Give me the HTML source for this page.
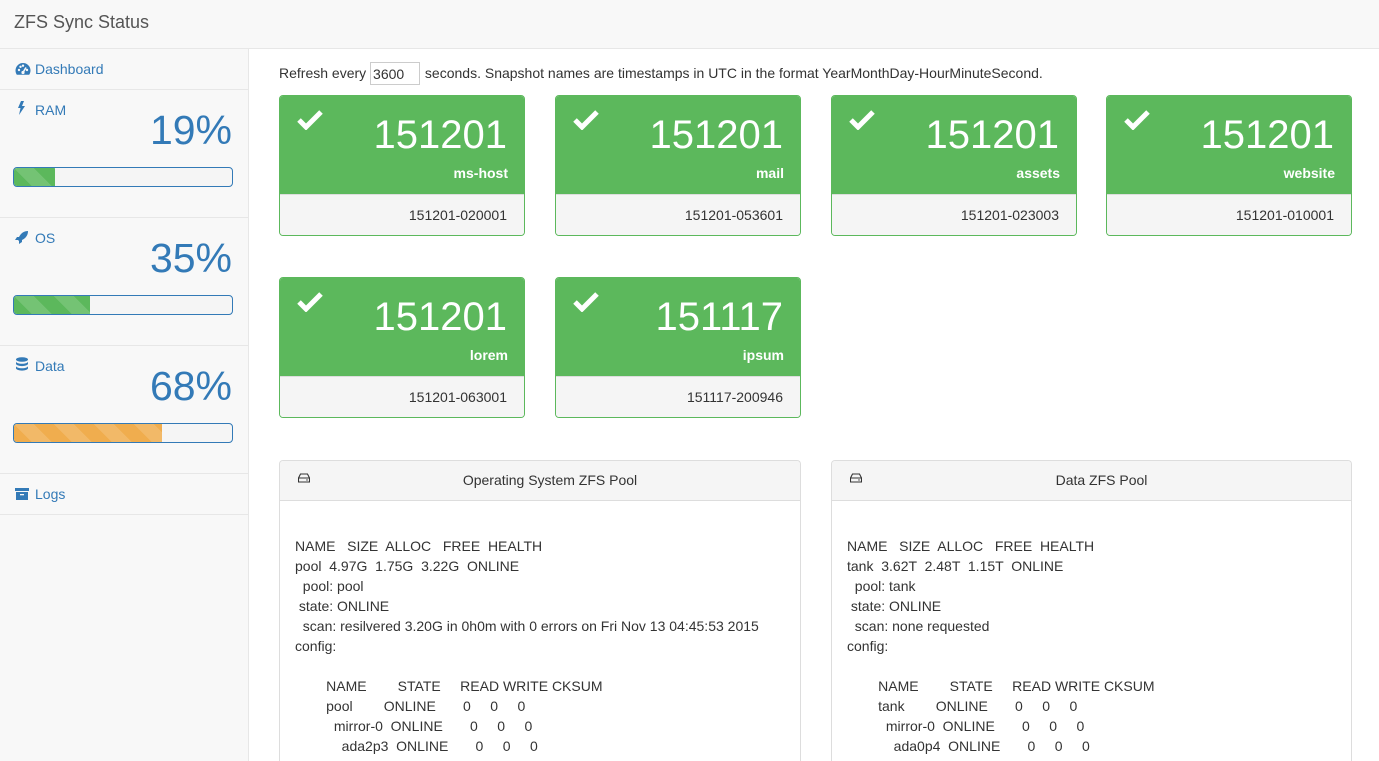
<!DOCTYPE html>
<html><head><meta charset="utf-8"><style>
*{box-sizing:border-box;margin:0;padding:0}
html,body{width:1379px;height:761px;overflow:hidden}
body{font-family:"Liberation Sans",Arial,sans-serif;font-size:14px;color:#333;background:#fff;position:relative}
.hdr{position:absolute;left:0;top:0;width:1379px;height:49px;background:#f8f8f8;border-bottom:1px solid #e7e7e7}
.hdr span{position:absolute;left:14px;top:12px;font-size:18px;color:#555}
.side{position:absolute;left:0;top:49px;width:249px;height:712px;background:#f8f8f8;border-right:1px solid #e7e7e7}
.item{position:absolute;left:0;width:248px;border-bottom:1px solid #e7e7e7;color:#337ab7}
.lbl{position:absolute;left:35px;font-size:14px;color:#337ab7}
.ic{position:absolute;left:15px}
.pct{position:absolute;right:16px;font-size:41px;color:#337ab7;top:17px}
.bar{position:absolute;left:13px;top:77px;width:220px;height:20px;border:1px solid #337ab7;border-radius:4px;background:#f5f5f5;overflow:hidden}
.bar div{height:100%}
.g{background:#5cb85c;background-image:linear-gradient(45deg,rgba(255,255,255,.15) 25%,transparent 25%,transparent 50%,rgba(255,255,255,.15) 50%,rgba(255,255,255,.15) 75%,transparent 75%,transparent);background-size:40px 40px}
.o{background:#f0ad4e;background-image:linear-gradient(45deg,rgba(255,255,255,.15) 25%,transparent 25%,transparent 50%,rgba(255,255,255,.15) 50%,rgba(255,255,255,.15) 75%,transparent 75%,transparent);background-size:40px 40px}
.refresh{position:absolute;left:279px;top:63px;font-size:14px;color:#333}
.refresh .in{display:inline-block;width:50px;height:23px;border:1px solid #ccc;vertical-align:middle;padding:3px 0 0 2px;margin:0 1px 0 0;position:relative;top:-1px;left:0}
.card{position:absolute;width:246px;height:141px;border:1px solid #5cb85c;border-radius:4px;overflow:hidden}
.card .top{height:98px;background:#5cb85c;color:#fff;position:relative}
.card .num{position:absolute;right:17px;top:17px;font-size:40px}
.card .nm{position:absolute;right:16px;top:69px;font-size:14px;font-weight:bold}
.card .bot{background:#f5f5f5;border-top:1px solid #ddd;height:42px;text-align:right;padding:12px 17px 0 0;font-size:14px;color:#333}
.card svg{position:absolute;left:17px;top:14px}
.panel{position:absolute;top:460px;width:522px;height:301px;border:1px solid #ddd;border-bottom:0;border-radius:4px 4px 0 0;overflow:hidden}
.panel .ph{height:40px;background:#f5f5f5;border-bottom:1px solid #ddd;text-align:center;padding:11px 0 0 20px;font-size:14px;position:relative}
.panel .ph svg{position:absolute;left:18px;top:12px}
.panel pre{font-family:"Liberation Sans",Arial,sans-serif;font-size:14px;line-height:20px;margin:35px 0 0 15px;white-space:pre;color:#333}
</style></head><body>
<div class="hdr"><span>ZFS Sync Status</span></div>
<div class="side">
 <div class="item" style="top:0;height:41px">
  <svg class="ic" style="top:13px" width="16" height="14" viewBox="0 0 16 14"><path d="M8 1A7.5 7.5 0 0 0 .5 8.5c0 1.6.5 3 1.3 4.2h12.4c.8-1.2 1.3-2.6 1.3-4.2A7.5 7.5 0 0 0 8 1z" fill="#337ab7"/><circle cx="4" cy="8" r="1.2" fill="#f8f8f8"/><circle cx="5.5" cy="4.8" r="1.2" fill="#f8f8f8"/><circle cx="8" cy="3.7" r="1.2" fill="#f8f8f8"/><circle cx="12" cy="8" r="1.2" fill="#f8f8f8"/><path d="M8 10.5l3-5" stroke="#f8f8f8" stroke-width="1.6"/><circle cx="8" cy="10.5" r="1.6" fill="#f8f8f8"/></svg>
  <span class="lbl" style="top:12px">Dashboard</span></div>
 <div class="item" style="top:41px;height:128px">
  <svg class="ic" style="top:11px;left:17px" width="8" height="14" viewBox="0 0 8 14"><path d="M4 0h3L5 5h3L2 14l1.5-7H1z" fill="#337ab7"/></svg>
  <span class="lbl" style="top:12px">RAM</span><div class="pct">19%</div>
  <div class="bar"><div class="g" style="width:19%"></div></div></div>
 <div class="item" style="top:169px;height:128px">
  <svg class="ic" style="top:12px" width="14" height="14" viewBox="0 0 14 14"><path d="M13 1c-4 0-7 2-9 6L2 7 0 10l3 0 1 1 0 3 3-2 0-2c4-2 6-5 6-9z" fill="#337ab7"/></svg>
  <span class="lbl" style="top:12px">OS</span><div class="pct">35%</div>
  <div class="bar"><div class="g" style="width:35%"></div></div></div>
 <div class="item" style="top:297px;height:128px">
  <svg class="ic" style="top:11px;left:16px" width="12" height="14" viewBox="0 0 12 14"><ellipse cx="6" cy="2.5" rx="6" ry="2.3" fill="#337ab7"/><path d="M0 4.5c0 1.3 2.7 2.3 6 2.3s6-1 6-2.3v2.3c0 1.3-2.7 2.3-6 2.3S0 8.1 0 6.8zM0 9c0 1.3 2.7 2.3 6 2.3s6-1 6-2.3v2.3C12 12.6 9.3 13.6 6 13.6S0 12.6 0 11.3z" fill="#337ab7"/></svg>
  <span class="lbl" style="top:12px">Data</span><div class="pct">68%</div>
  <div class="bar"><div class="o" style="width:68%"></div></div></div>
 <div class="item" style="top:425px;height:41px">
  <svg class="ic" style="top:14px" width="14" height="12" viewBox="0 0 14 12"><rect x="0" y="0" width="14" height="3" fill="#337ab7"/><rect x="1" y="4" width="12" height="8" fill="#337ab7"/><rect x="5" y="6" width="4" height="1.3" fill="#f8f8f8"/></svg>
  <span class="lbl" style="top:12px">Logs</span></div>
</div>
<div class="refresh">Refresh every <span class="in">3600</span> seconds. Snapshot names are timestamps in UTC in the format YearMonthDay-HourMinuteSecond.</div>

<div class="card" style="left:279px;top:95px"><div class="top"><svg width="26" height="20" viewBox="0 0 26 20"><path d="M2 10l7 7L24 2" stroke="#fff" stroke-width="5" fill="none"/></svg><div class="num">151201</div><div class="nm">ms-host</div></div><div class="bot">151201-020001</div></div>
<div class="card" style="left:555px;top:95px"><div class="top"><svg width="26" height="20" viewBox="0 0 26 20"><path d="M2 10l7 7L24 2" stroke="#fff" stroke-width="5" fill="none"/></svg><div class="num">151201</div><div class="nm">mail</div></div><div class="bot">151201-053601</div></div>
<div class="card" style="left:831px;top:95px"><div class="top"><svg width="26" height="20" viewBox="0 0 26 20"><path d="M2 10l7 7L24 2" stroke="#fff" stroke-width="5" fill="none"/></svg><div class="num">151201</div><div class="nm">assets</div></div><div class="bot">151201-023003</div></div>
<div class="card" style="left:1106px;top:95px"><div class="top"><svg width="26" height="20" viewBox="0 0 26 20"><path d="M2 10l7 7L24 2" stroke="#fff" stroke-width="5" fill="none"/></svg><div class="num">151201</div><div class="nm">website</div></div><div class="bot">151201-010001</div></div>
<div class="card" style="left:279px;top:277px"><div class="top"><svg width="26" height="20" viewBox="0 0 26 20"><path d="M2 10l7 7L24 2" stroke="#fff" stroke-width="5" fill="none"/></svg><div class="num">151201</div><div class="nm">lorem</div></div><div class="bot">151201-063001</div></div>
<div class="card" style="left:555px;top:277px"><div class="top"><svg width="26" height="20" viewBox="0 0 26 20"><path d="M2 10l7 7L24 2" stroke="#fff" stroke-width="5" fill="none"/></svg><div class="num">151117</div><div class="nm">ipsum</div></div><div class="bot">151117-200946</div></div>

<div class="panel" style="left:279px"><div class="ph"><svg width="12" height="10" viewBox="0 0 12 10"><path d="M2.5 1h7L11.5 5v4h-11V5z M.5 5h11" stroke="#333" stroke-width="1.1" fill="none"/><circle cx="9" cy="7" r=".7" fill="#333"/></svg>Operating System ZFS Pool</div>
<pre>NAME   SIZE  ALLOC   FREE  HEALTH
pool  4.97G  1.75G  3.22G  ONLINE
  pool: pool
 state: ONLINE
  scan: resilvered 3.20G in 0h0m with 0 errors on Fri Nov 13 04:45:53 2015
config:

        NAME        STATE     READ WRITE CKSUM
        pool        ONLINE       0     0     0
          mirror-0  ONLINE       0     0     0
            ada2p3  ONLINE       0     0     0
            ada3p3  ONLINE       0     0     0</pre></div>
<div class="panel" style="left:831px;width:521px"><div class="ph"><svg width="12" height="10" viewBox="0 0 12 10"><path d="M2.5 1h7L11.5 5v4h-11V5z M.5 5h11" stroke="#333" stroke-width="1.1" fill="none"/><circle cx="9" cy="7" r=".7" fill="#333"/></svg>Data ZFS Pool</div>
<pre>NAME   SIZE  ALLOC   FREE  HEALTH
tank  3.62T  2.48T  1.15T  ONLINE
  pool: tank
 state: ONLINE
  scan: none requested
config:

        NAME        STATE     READ WRITE CKSUM
        tank        ONLINE       0     0     0
          mirror-0  ONLINE       0     0     0
            ada0p4  ONLINE       0     0     0
            ada1p4  ONLINE       0     0     0</pre></div>
</body></html>
